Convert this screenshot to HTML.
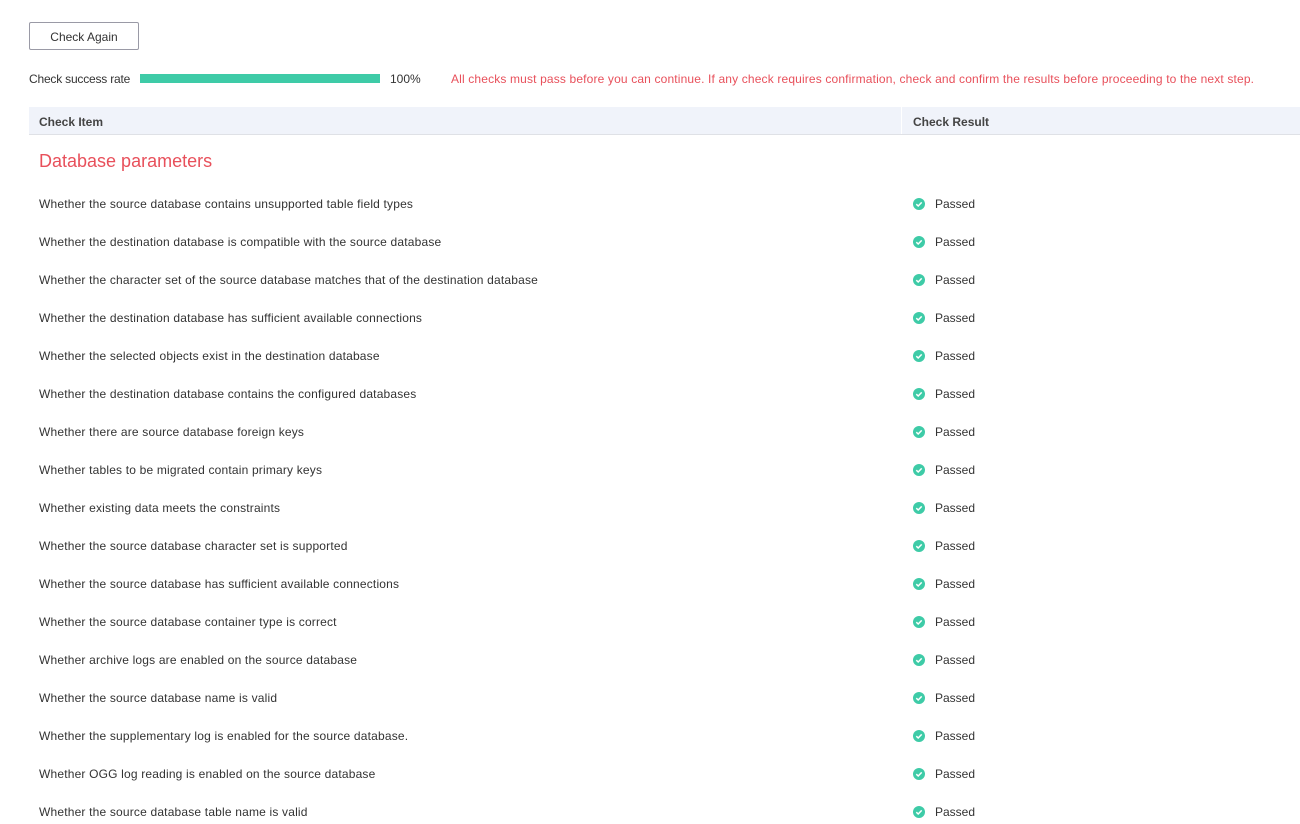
<!DOCTYPE html>
<html><head><meta charset="utf-8"><style>
body{margin:0;background:#fff;font-family:"Liberation Sans",sans-serif;color:#333;font-size:12px;width:1300px;height:824px;overflow:hidden;position:relative}
.btn{position:absolute;left:29px;top:22px;width:108px;height:26px;border:1px solid #9a9aa6;border-radius:2px;text-align:center;line-height:28px;font-size:12px;color:#333}
.rate{position:absolute;left:29px;top:72px;line-height:14px;letter-spacing:-0.2px}
.bar{position:absolute;left:140px;top:74px;width:240px;height:9px;background:#3ecba7}
.pct{position:absolute;left:390px;top:72px;line-height:14px}
.warn{position:absolute;left:451px;top:72px;line-height:14px;color:#e8505b;letter-spacing:0.15px;white-space:nowrap}
.head{position:absolute;left:29px;top:107px;width:1271px;height:27px;background:#f0f3fa;border-bottom:1px solid #dfe1e6;font-weight:bold;color:#444}
.head span{position:absolute;top:8px}
.sep{position:absolute;left:872px;top:0;width:1px;height:27px;background:#fff}
h2{position:absolute;left:39px;top:151px;margin:0;font-weight:normal;font-size:18px;color:#e8505b}
.row{position:absolute;left:39px;height:16px;line-height:16px;width:1250px;letter-spacing:0.18px}
.row .r{position:absolute;left:874px;top:0;letter-spacing:0}
.dot{position:absolute;left:0;top:2px;width:12px;height:12px;border-radius:50%;background:#3ecba7}
.dot svg{position:absolute;left:0;top:0}
.r b{font-weight:normal;margin-left:22px}
</style></head><body>
<div class="btn">Check Again</div>
<div class="rate">Check success rate</div>
<div class="bar"></div>
<div class="pct">100%</div>
<div class="warn">All checks must pass before you can continue. If any check requires confirmation, check and confirm the results before proceeding to the next step.</div>
<div class="head"><span style="left:10px">Check Item</span><div class="sep"></div><span style="left:884px">Check Result</span></div>
<h2>Database parameters</h2>
<div id="rows"></div>
<script>
var items=["Whether the source database contains unsupported table field types","Whether the destination database is compatible with the source database","Whether the character set of the source database matches that of the destination database","Whether the destination database has sufficient available connections","Whether the selected objects exist in the destination database","Whether the destination database contains the configured databases","Whether there are source database foreign keys","Whether tables to be migrated contain primary keys","Whether existing data meets the constraints","Whether the source database character set is supported","Whether the source database has sufficient available connections","Whether the source database container type is correct","Whether archive logs are enabled on the source database","Whether the source database name is valid","Whether the supplementary log is enabled for the source database.","Whether OGG log reading is enabled on the source database","Whether the source database table name is valid"];
var h="";items.forEach(function(t,i){h+='<div class="row" style="top:'+(196+i*38)+'px">'+t+'<div class="r"><span class="dot"><svg width="12" height="12"><path d="M3.3 6.2 L5.2 8 L8.7 4.4" stroke="#fff" stroke-width="1.5" fill="none"/></svg></span><b>Passed</b></div></div>';});
document.getElementById("rows").innerHTML=h;
</script>
</body></html>
